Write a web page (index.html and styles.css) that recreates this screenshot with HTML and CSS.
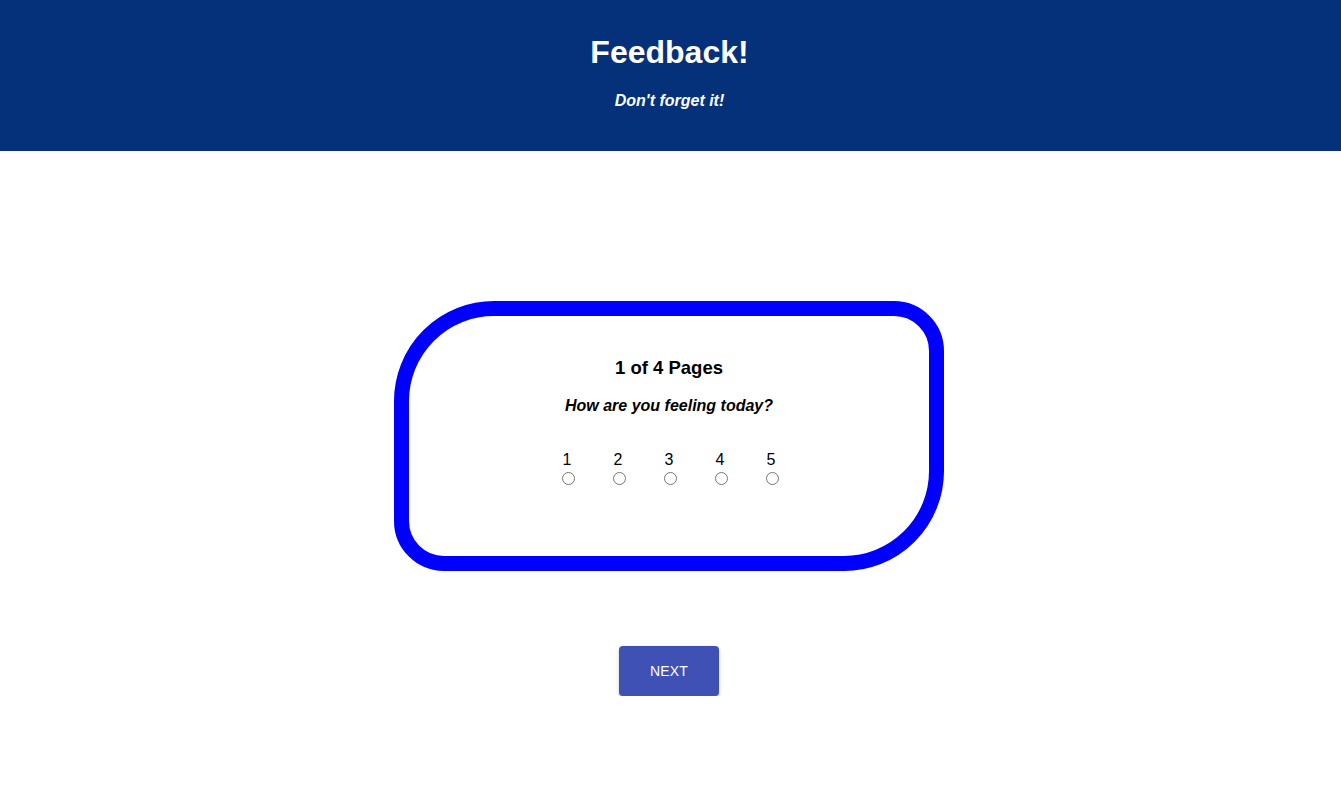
FILE: index.html
```html
<!DOCTYPE html>
<html lang="en">
<head>
<meta charset="utf-8">
<title>Feedback!</title>
<link rel="stylesheet" href="styles.css">
</head>
<body>
<header class="header">
  <h1 class="header-title">Feedback!</h1>
  <p class="header-sub">Don't forget it!</p>
</header>
<main class="main">
  <section class="card">
    <h2 class="card-title">1 of 4 Pages</h2>
    <p class="card-question">How are you feeling today?</p>
    <div class="scale">
      <label class="scale-item"><span class="scale-num">1</span><input type="radio" name="feel" class="scale-radio"></label>
      <label class="scale-item"><span class="scale-num">2</span><input type="radio" name="feel" class="scale-radio"></label>
      <label class="scale-item"><span class="scale-num">3</span><input type="radio" name="feel" class="scale-radio"></label>
      <label class="scale-item"><span class="scale-num">4</span><input type="radio" name="feel" class="scale-radio"></label>
      <label class="scale-item"><span class="scale-num">5</span><input type="radio" name="feel" class="scale-radio"></label>
    </div>
  </section>
  <button class="next-btn" type="button">NEXT</button>
</main>
</body>
</html>
```
FILE: styles.css
```css
html, body {
  margin: 0;
  padding: 0;
  background: #ffffff;
  font-family: "Liberation Sans", Arial, Helvetica, sans-serif;
  color: #000;
}

.header {
  background: #05307a;
  color: #ffffff;
  text-align: center;
  height: 151px;
  box-sizing: border-box;
  padding-top: 34px;
  padding-right: 2px;
}

.header-title {
  margin: 0;
  font-size: 32px;
  line-height: 37px;
  font-weight: 700;
}

.header-sub {
  margin: 21px 0 0;
  font-size: 16px;
  line-height: 18px;
  font-weight: 700;
  font-style: italic;
}

.main {
  display: flex;
  flex-direction: column;
  align-items: center;
  padding-top: 150px;
  padding-right: 3px;
}

.card {
  width: 550px;
  height: 270px;
  box-sizing: border-box;
  border: 15px solid #0000ff;
  border-radius: 100px 50px;
  display: flex;
  flex-direction: column;
  align-items: center;
  padding-top: 41px;
}

.card-title {
  margin: 0;
  font-size: 18.5px;
  line-height: 21px;
  font-weight: 700;
}

.card-question {
  margin: 19px 0 0;
  font-size: 16px;
  line-height: 18px;
  font-weight: 700;
  font-style: italic;
}

.scale {
  display: flex;
  margin-top: 36px;
}

.scale-item {
  width: 51px;
  display: flex;
  flex-direction: column;
  align-items: center;
  font-size: 16px;
  line-height: 18px;
}

.scale-num {
  display: block;
}

.scale-radio {
  width: 13px;
  height: 13px;
  margin: 3px 0 0 3px;
}

.next-btn {
  margin-top: 75px;
  width: 100px;
  height: 50px;
  border: none;
  border-radius: 4px;
  background: #3f51b5;
  color: #ffffff;
  font-family: "Liberation Sans", Arial, sans-serif;
  font-size: 14px;
  font-weight: 400;
  letter-spacing: 0.2px;
  box-shadow: 0 3px 1px -2px rgba(0,0,0,0.2), 0 2px 2px 0 rgba(0,0,0,0.14), 0 1px 5px 0 rgba(0,0,0,0.12);
  cursor: pointer;
}
```
